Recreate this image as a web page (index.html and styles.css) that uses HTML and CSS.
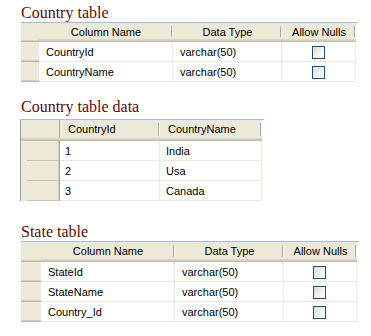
FILE: index.html
```html
<!DOCTYPE html>
<html lang="en">
<head>
  <meta charset="UTF-8" />
  <title>Country and State tables</title>
  <link rel="stylesheet" href="styles.css">
</head>
<body>
  <h2 class="caption caption-first">Country table</h2>
  <div class="sheet design sheet-country">
    <div class="hd sel"></div>
    <div class="hd center">Column Name</div>
    <div class="hd center">Data Type</div>
    <div class="hd center">Allow Nulls</div>

    <div class="sel"></div>
    <div class="cell">CountryId</div>
    <div class="cell">varchar(50)</div>
    <div class="cell check"><span class="box"></span></div>

    <div class="sel"></div>
    <div class="cell">CountryName</div>
    <div class="cell">varchar(50)</div>
    <div class="cell check"><span class="box"></span></div>
  </div>

  <h2 class="caption caption-data">Country table data</h2>
  <div class="sheet data">
    <div class="hd sel"></div>
    <div class="hd">CountryId</div>
    <div class="hd">CountryName</div>

    <div class="sel"></div>
    <div class="cell">1</div>
    <div class="cell">India</div>

    <div class="sel"></div>
    <div class="cell">2</div>
    <div class="cell">Usa</div>

    <div class="sel"></div>
    <div class="cell">3</div>
    <div class="cell">Canada</div>
  </div>

  <h2 class="caption caption-state">State table</h2>
  <div class="sheet design sheet-state">
    <div class="hd sel"></div>
    <div class="hd center">Column Name</div>
    <div class="hd center">Data Type</div>
    <div class="hd center">Allow Nulls</div>

    <div class="sel"></div>
    <div class="cell">StateId</div>
    <div class="cell">varchar(50)</div>
    <div class="cell check"><span class="box"></span></div>

    <div class="sel"></div>
    <div class="cell">StateName</div>
    <div class="cell">varchar(50)</div>
    <div class="cell check"><span class="box"></span></div>

    <div class="sel"></div>
    <div class="cell">Country_Id</div>
    <div class="cell">varchar(50)</div>
    <div class="cell check"><span class="box"></span></div>
  </div>
</body>
</html>
```

FILE: styles.css
```css
:root {
  --face: #ece9d8;
  --grid: #ebeadb;
  --edge: #aca899;
  --blue: #a4bbe4;
}

body {
  margin: 0;
  padding: 0 0 0 21px;
  background: #fff;
  font-family: 'Liberation Sans', Arial, sans-serif;
  font-size: 11px;
  color: #000;
}

.caption {
  margin: 0;
  font-family: 'Liberation Serif', 'Times New Roman', serif;
  font-size: 16px;
  font-weight: normal;
  line-height: 19px;
  color: #560b0b;
}

.caption-first { margin-top: 3px; }
.caption-data { margin-top: 15px; margin-bottom: 3px; }
.caption-state { margin-top: 21px; }

.sheet {
  display: grid;
  grid-auto-rows: 20px;
  border-top: 1px solid var(--blue);
  padding-right: 2px;
}

.sheet-country {
  width: 335px;
  grid-template-columns: 18px 134px 109px 74px;
  grid-template-rows: 19px;
}

.sheet-state {
  width: 336px;
  grid-template-columns: 20px 134px 109px 73px;
}

.data {
  width: 241px;
  grid-template-columns: 39px 100px 102px;
  grid-template-rows: 21px;
  border-left: 1px solid #9c9c9c;
  margin-left: -1px;
}

.hd {
  box-sizing: border-box;
  padding: 2px 0 0 8px;
  line-height: 14px;
  white-space: nowrap;
  background:
    linear-gradient(var(--edge), var(--edge)) right 1px top 3px / 1px calc(100% - 8px) no-repeat,
    linear-gradient(#fff, #fff) right 0 top 3px / 1px calc(100% - 8px) no-repeat,
    var(--face);
  box-shadow: inset 0 -1px #c2beac, inset 0 -2px #d0ccbc, inset 0 -3px #dcd8c7;
}

.hd.center {
  padding-left: 0;
  text-align: center;
}

.cell {
  box-sizing: border-box;
  padding: 3px 0 0 7px;
  line-height: 14px;
  white-space: nowrap;
  border-right: 1px solid var(--grid);
  border-bottom: 1px solid var(--grid);
}

.data .cell {
  padding-left: 5px;
}

.data .cell + .cell {
  padding-left: 6px;
}

.sel {
  background: var(--face);
  box-shadow: inset 0 -1px #b9b5a3, inset 0 -2px #d2cfbf;
}

.data .sel {
  box-shadow: inset -1px 0 #aca899, inset -2px 0 #d4d0c0;
  background:
    linear-gradient(#c9c5b5, #c9c5b5) left 6px bottom 0 / 31px 1px no-repeat,
    var(--face);
}

.data .hd.sel {
  box-shadow: inset 0 -1px #c2beac, inset 0 -2px #d0ccbc, inset 0 -3px #dcd8c7, inset -1px 0 #aca899;
  background: var(--face);
}

.check {
  display: flex;
  justify-content: center;
  align-items: center;
  padding: 1px 1px 0 0;
}

.box {
  width: 11px;
  height: 11px;
  border: 1px solid #1c5180;
  background: linear-gradient(135deg, #dcdcd5 0%, #f4f4f0 60%, #fff 100%);
}
```
